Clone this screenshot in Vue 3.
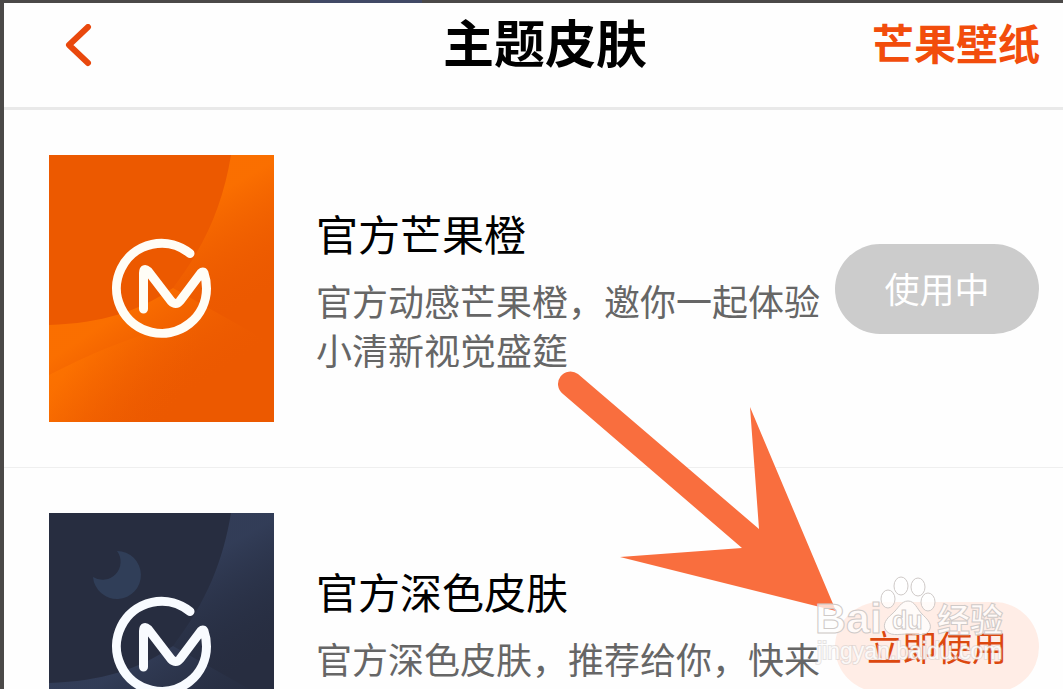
<script setup>
const skins = [
  {
    id: 'orange',
    name: '官方芒果橙',
    desc: '官方动感芒果橙，邀你一起体验小清新视觉盛筵',
    action: '使用中',
    active: true,
    base: '#ec5900',
    glow: '#ff7600',
    shade: '#ec5900',
    logo: '#fffdf6',
  },
  {
    id: 'dark',
    name: '官方深色皮肤',
    desc: '官方深色皮肤，推荐给你，快来',
    action: '立即使用',
    active: false,
    base: '#272d40',
    glow: '#36425f',
    shade: '#273046',
    logo: '#f8fbff',
  },
]
</script>

<template>
  <div class="screen">
    <main class="page">
      <header class="bar">
        <button class="back" type="button" aria-label="返回">
          <svg width="28" height="44" viewBox="0 0 28 44">
            <path d="M24 3L5 21L24 39" fill="none" stroke="#e9480d" stroke-width="6" stroke-linecap="round" stroke-linejoin="round" />
          </svg>
        </button>
        <h1>主题皮肤</h1>
        <a class="wallpaper" href="#">芒果壁纸</a>
      </header>

      <ul class="list">
        <li v-for="skin in skins" :key="skin.id" class="row">
          <svg class="thumb" viewBox="0 0 225 267" aria-hidden="true">
            <defs>
              <linearGradient :id="skin.id + '-a'" gradientUnits="userSpaceOnUse" x1="165" y1="40" x2="222" y2="140">
                <stop offset="0" :stop-color="skin.glow" stop-opacity="0.75" />
                <stop offset="1" :stop-color="skin.shade" stop-opacity="0" />
              </linearGradient>
              <linearGradient :id="skin.id + '-b'" gradientUnits="userSpaceOnUse" x1="20" y1="210" x2="120" y2="270">
                <stop offset="0" :stop-color="skin.glow" stop-opacity="0.6" />
                <stop offset="1" :stop-color="skin.shade" stop-opacity="0" />
              </linearGradient>
              <linearGradient :id="skin.id + '-c'" gradientUnits="userSpaceOnUse" x1="60" y1="165" x2="120" y2="255">
                <stop offset="0" :stop-color="skin.glow" stop-opacity="0.75" />
                <stop offset="1" :stop-color="skin.shade" stop-opacity="0" />
              </linearGradient>
            </defs>
            <rect width="225" height="267" :fill="skin.base" />
            <path d="M182 0C174 48 158 88 124 133L225 190V0Z" :fill="`url(#${skin.id}-a)`" />
            <path d="M124 133C88 157 54 168 0 170V267H225V190Z" :fill="`url(#${skin.id}-c)`" />
            <path d="M0 220C40 200 80 180 150 165V267H0Z" :fill="`url(#${skin.id}-b)`" />
            <path v-if="skin.id === 'dark'" d="M68 38A24 24 0 1 1 44 64A18 18 0 0 0 68 38Z" fill="#303e58" />
            <path
              d="M141 98.500A45 45 0 1 0 157.500 133.500Q157.500 125 155 118Q154 116 152 118L131 146Q127 151 122 146L99 116Q94.500 112 94.500 118V154"
              fill="none"
              :stroke="skin.logo"
              stroke-width="9"
              stroke-linecap="round"
              stroke-linejoin="round"
            />
          </svg>
          <div class="info">
            <h2>{{ skin.name }}</h2>
            <p>{{ skin.desc }}</p>
          </div>
          <button type="button" class="use" :class="{ active: skin.active }">{{ skin.action }}</button>
        </li>
      </ul>
    </main>

    <svg class="arrow" width="220" height="244" viewBox="618 369 220 244" aria-hidden="true">
      <path d="M578 374L759 529L750 407L836 611L620 557L742 548L563 394A12 12 0 0 1 578 374Z" fill="#f96e3e" />
    </svg>

    <svg class="mark" width="200" height="100" viewBox="0 0 200 100">
      <g fill="#fff" fill-opacity="0.75" stroke="#cfcac8" stroke-width="1">
        <text x="5" y="63" class="latin" font-size="43">Bai</text>
        <ellipse cx="78" cy="29" rx="7" ry="9" />
        <ellipse cx="91" cy="16" rx="7" ry="9" />
        <ellipse cx="108" cy="17" rx="7" ry="9" />
        <ellipse cx="118" cy="32" rx="7" ry="9" />
        <path d="M98 31C91 31 88 39 82 44C76 49 73 54 75 59C79 67 89 64 98 64C107 64 117 67 120 59C122 53 116 48 112 44C107 39 105 31 98 31Z" />
        <text x="82" y="59" class="latin" font-size="25">du</text>
        <text x="127" y="62" class="han" font-size="33">经验</text>
      </g>
      <text x="7" y="89" class="url" font-size="23" fill="#fff" fill-opacity="0.85" stroke="#cfcac8" stroke-opacity="0.5" stroke-width="2" paint-order="stroke">jingyan.baidu.com</text>
    </svg>
  </div>
</template>

<style>
body {
  margin: 0;
}
</style>

<style scoped>
.screen {
  position: relative;
  box-sizing: border-box;
  height: 100vh;
  padding: 3px 0 0 4px;
  overflow: hidden;
  background: linear-gradient(90deg, #4b4948 310px, #414965 310px, #414965 422px, #4b4948 422px);
  font-family: "Liberation Sans", "Noto Sans CJK SC", sans-serif;
}

.page {
  min-height: 100%;
  background: #fefefe;
}

.bar {
  display: grid;
  grid-template-columns: 1fr auto 1fr;
  align-items: center;
  box-sizing: border-box;
  height: 107px;
  padding: 2px 23px 20px 60px;
  border-bottom: 3px solid #e9e9e9;
}

.bar h1 {
  margin: 0;
  padding-right: 14px;
  font-size: 51px;
  line-height: 72px;
  font-weight: 700;
  color: #000;
}

.back {
  justify-self: start;
  display: flex;
  padding: 0;
  border: 0;
  background: none;
}

.wallpaper {
  justify-self: end;
  font-size: 42px;
  line-height: 60px;
  font-weight: 700;
  color: #f24d0c;
  text-decoration: none;
}

.list {
  margin: 0;
  padding: 0;
  list-style: none;
}

.row {
  display: flex;
  align-items: center;
  padding: 45px 24px 45px 45px;
  border-bottom: 1px solid #efefef;
}

.thumb {
  flex: none;
  width: 225px;
  height: 267px;
  margin-right: 42px;
}

.info {
  flex: 1;
  min-width: 0;
  margin-right: 14px;
  padding-top: 6px;
}

.info h2 {
  margin: 0 0 12px;
  font-size: 42px;
  line-height: 60px;
  font-weight: 400;
  color: #000;
}

.info p {
  min-height: 98px;
  margin: 0;
  font-size: 36px;
  line-height: 49px;
  color: #666;
}

.use {
  flex: none;
  width: 204px;
  height: 90px;
  padding: 0 0 2px;
  border: 0;
  border-radius: 45px;
  background: #ffede6;
  font-family: inherit;
  font-size: 35px;
  color: #dc480f;
}

.use.active {
  background: #ccc;
  color: #fff;
}

.arrow {
  position: absolute;
  left: 618px;
  top: 369px;
  overflow: visible;
}

.mark {
  position: absolute;
  right: 53px;
  bottom: 19px;
}

.latin {
  font-family: "Liberation Sans", sans-serif;
  font-weight: 700;
}

.han {
  font-family: "Noto Sans CJK SC", sans-serif;
  font-weight: 700;
}

.url {
  font-family: "Liberation Sans", sans-serif;
}
</style>
